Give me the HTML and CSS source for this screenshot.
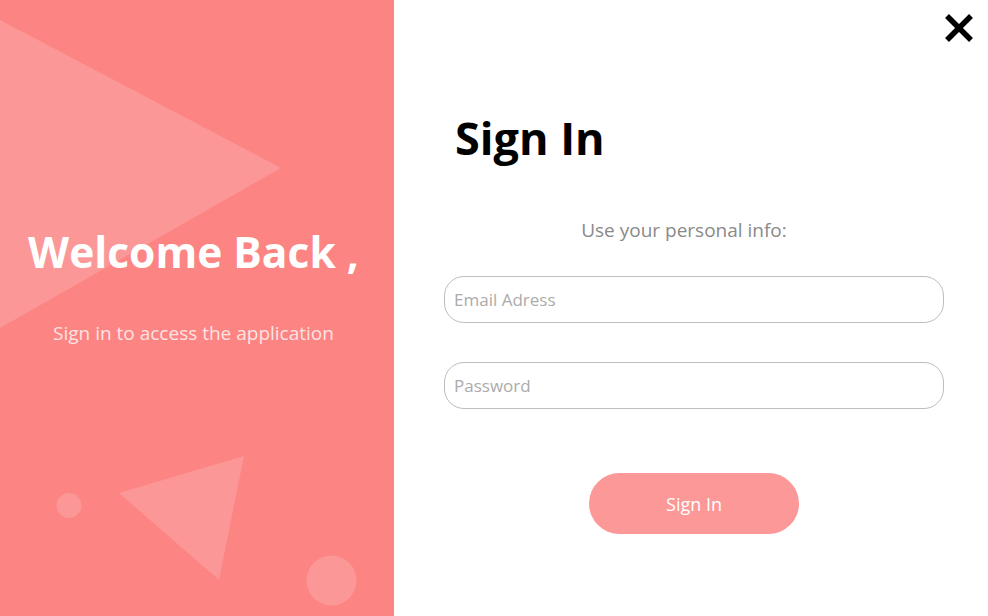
FILE: index.html
```html
<!DOCTYPE html>
<html lang="en">
<head>
<meta charset="utf-8">
<title>Sign In</title>
<link rel="stylesheet" href="styles.css">
</head>
<body>
<div class="modal">
  <section class="welcome">
    <svg class="shapes" width="394" height="616" viewBox="0 0 394 616" aria-hidden="true">
      <polygon points="0,20 281,168 0,328" fill="#fb9897"/>
      <circle cx="69" cy="505.5" r="12.5" fill="#fb9897"/>
      <polygon points="119,493 244,456 219,580" fill="#fb9897"/>
      <circle cx="331.5" cy="580.5" r="25" fill="#fb9897"/>
    </svg>
    <div class="welcome-text">
      <h2 class="welcome-title">Welcome Back ,</h2>
      <p class="welcome-sub">Sign in to access the application</p>
    </div>
  </section>
  <section class="form-side">
    <button class="close" aria-label="Close">
      <svg width="30" height="30" viewBox="0 0 30 30"><path d="M3 3 L27 27 M27 3 L3 27" stroke="#000" stroke-width="5.5"/></svg>
    </button>
    <h1 class="title">Sign In</h1>
    <form class="form">
      <p class="hint">Use your personal info:</p>
      <input class="field" type="email" placeholder="Email Adress">
      <input class="field" type="password" placeholder="Password">
      <button class="submit" type="button">Sign In</button>
    </form>
  </section>
</div>
</body>
</html>
```
FILE: styles.css
```css
* { box-sizing: border-box; }
html, body { margin: 0; padding: 0; }
body {
  width: 988px;
  height: 616px;
  overflow: hidden;
  background: #fff;
  font-family: "Open Sans", "Noto Sans", sans-serif;
}
.modal {
  display: flex;
  width: 988px;
  height: 616px;
}
.welcome {
  position: relative;
  width: 394px;
  flex: none;
  background: #fc8482;
  overflow: hidden;
}
.shapes {
  position: absolute;
  left: 0;
  top: 0;
}
.welcome-text {
  position: relative;
  padding: 224px 7px 0 0;
  text-align: center;
  color: #fff;
}
.welcome-title {
  margin: 0;
  font-size: 42.5px;
  font-weight: 700;
  line-height: 56px;
}
.welcome-sub {
  margin: 40px 0 0;
  font-size: 19px;
  line-height: 26px;
  color: #fde3e3;
}
.form-side {
  position: relative;
  flex: 1;
  padding: 110px 0 0 61px;
}
.close {
  position: absolute;
  top: 13px;
  right: 14px;
  padding: 0;
  border: 0;
  background: none;
  width: 30px;
  height: 30px;
}
.close svg { display: block; }
.title {
  margin: 0;
  font-size: 45px;
  line-height: 56px;
  font-weight: 700;
  color: #000;
}
.form {
  width: 500px;
  margin: 51px 0 0 -11px;
  display: flex;
  flex-direction: column;
  align-items: center;
}
.hint {
  margin: 0 0 33px;
  font-size: 19px;
  line-height: 26px;
  color: #8a8a8a;
  transform: translateX(-10px);
}
.field {
  width: 500px;
  height: 47px;
  border: 1.5px solid #bdbdbd;
  border-radius: 20px;
  padding: 0 9px;
  font-family: inherit;
  font-size: 17px;
  color: #333;
  background: #fff;
  outline: none;
  margin-bottom: 39px;
}
.field::placeholder { color: #ababab; }
.submit {
  margin-top: 25px;
  width: 210px;
  height: 61px;
  border: 0;
  border-radius: 31px;
  background: #fc9897;
  color: #fff;
  font-family: inherit;
  font-size: 18px;
}
```
